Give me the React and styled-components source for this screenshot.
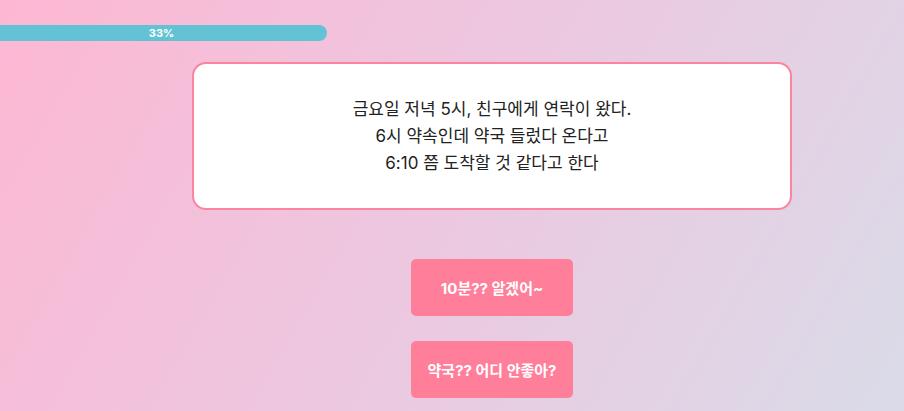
import React from "react";
import styled, { createGlobalStyle } from "styled-components";

const GlobalStyle = createGlobalStyle`
  html, body {
    margin: 0;
    padding: 0;
  }
  body {
    font-family: "Inter", "Noto Sans CJK KR", sans-serif;
    background: linear-gradient(120deg, #fdb7d3 0%, #ecc8e0 50%, #dadbe8 100%);
    min-height: 100vh;
  }
`;

const choices = ["10분?? 알겠어~", "약국?? 어디 안좋아?"];

const App = () => {
  const progress = 33;
  return (
    <>
      <GlobalStyle />
      <Page>
        <ProgressTrack>
          <ProgressFill style={{ width: "327px" }}>{progress}%</ProgressFill>
        </ProgressTrack>
        <Main>
          <StoryCard>
            <p>금요일 저녁 5시, 친구에게 연락이 왔다.</p>
            <p>6시 약속인데 약국 들렀다 온다고</p>
            <p>6:10 쯤 도착할 것 같다고 한다</p>
          </StoryCard>
          <Choices>
            {choices.map((c) => (
              <ChoiceButton key={c}>{c}</ChoiceButton>
            ))}
          </Choices>
        </Main>
      </Page>
    </>
  );
};

const Page = styled.div`
  height: 411px;
  overflow: hidden;
  padding-top: 25px;
  box-sizing: border-box;
`;

const ProgressTrack = styled.div`
  height: 16px;
`;

const ProgressFill = styled.div`
  height: 16px;
  box-sizing: border-box;
  padding-right: 4px;
  background: #63c3d5;
  border-radius: 0 8px 8px 0;
  color: #fff;
  font-family: "Inter", sans-serif;
  font-weight: 700;
  font-size: 11px;
  line-height: 16px;
  text-align: center;
`;

const Main = styled.div`
  margin-left: 80px;
  display: flex;
  flex-direction: column;
  align-items: center;
  padding-top: 21px;
`;

const StoryCard = styled.div`
  width: 600px;
  height: 148px;
  box-sizing: border-box;
  background: #fff;
  border: 2px solid #fb84a0;
  border-radius: 14px;
  display: flex;
  flex-direction: column;
  justify-content: center;
  align-items: center;
  color: #222;
  font-size: 17px;
  line-height: 27px;

  p {
    margin: 0;
  }
`;

const Choices = styled.div`
  margin-top: 49px;
  display: flex;
  flex-direction: column;
  gap: 25px;
`;

const ChoiceButton = styled.button`
  width: 162px;
  height: 57px;
  border: none;
  border-radius: 5px;
  background: #ff7f9b;
  color: #fff;
  font-family: "Inter", "Noto Sans CJK KR", sans-serif;
  font-weight: 700;
  font-size: 15px;
  cursor: pointer;
`;

export default App;
